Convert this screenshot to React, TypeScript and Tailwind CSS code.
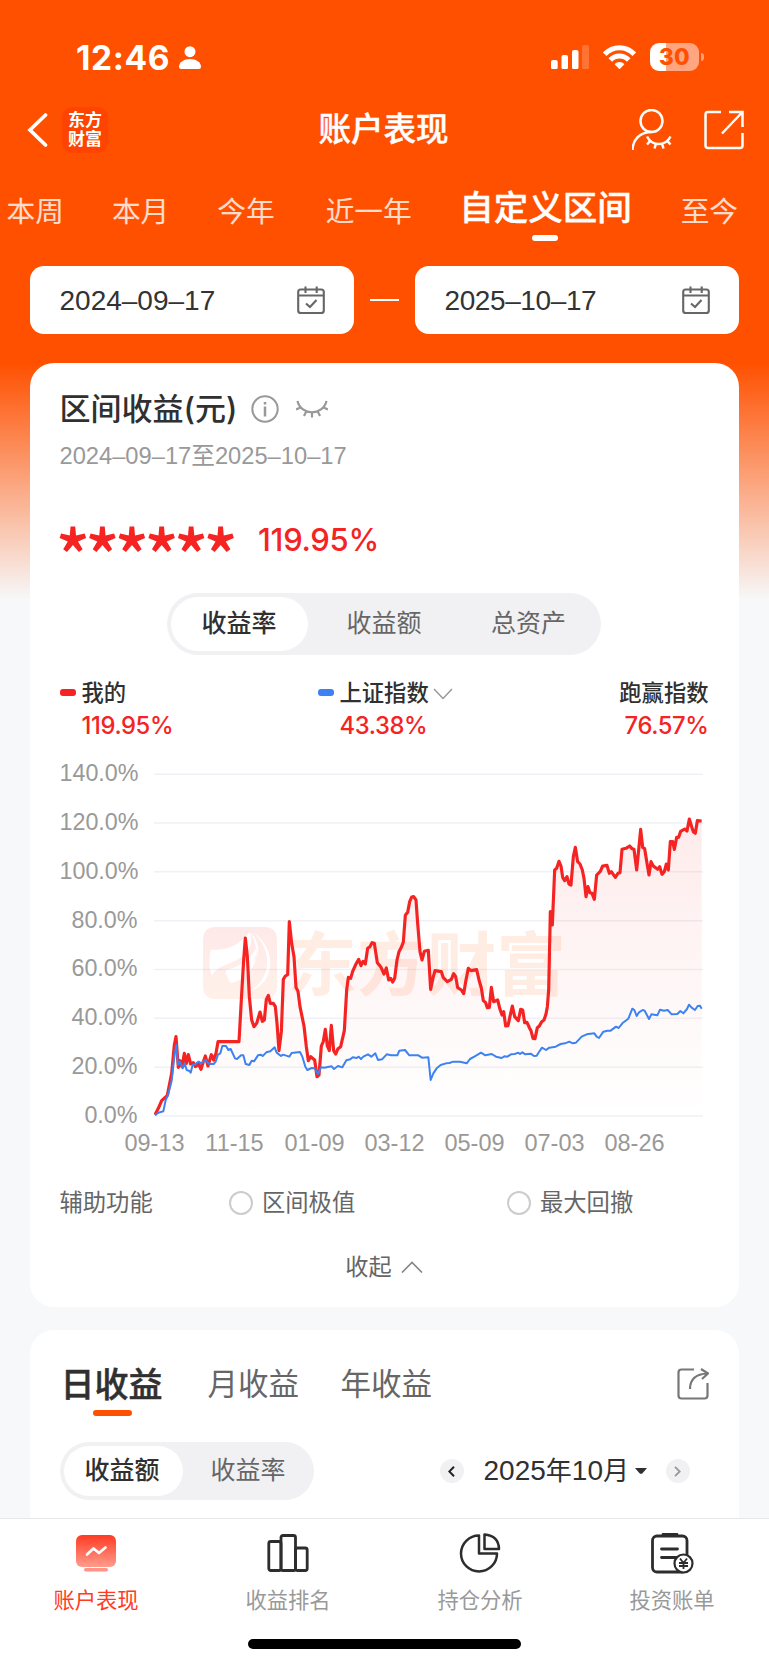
import { clsx } from "clsx"
import type { ReactNode } from "react"

const PERIODS = ["本周", "本月", "今年", "近一年", "自定义区间", "至今"]
const Y_LABELS = ["140.0%", "120.0%", "100.0%", "80.0%", "60.0%", "40.0%", "20.0%", "0.0%"]
const X_LABELS = ["09-13", "11-15", "01-09", "03-12", "05-09", "07-03", "08-26"]

// Chart space: three units per pixel, grid lines 146.5 units apart
const MINE =
  "45,1064 55,1045 65,1022 82,1006 95,940 103,855 108,830 115,922 120,902 126,920 133,880 139,910 145,884 152,912 160,908 166,920 176,912 183,928 190,905 196,888 204,918 214,884 221,900 228,880 234,845 297,845 304,720 311,600 316,534 322,590 328,710 335,780 342,800 350,790 360,756 367,784 373,780 379,718 385,706 391,730 400,730 406,740 411,790 417,872 424,815 430,658 436,648 443,644 448,485 455,550 462,590 468,682 474,694 480,740 492,798 499,860 505,902 512,890 524,900 531,950 537,945 544,858 550,844 556,808 562,858 568,872 574,796 581,872 587,882 594,866 602,860 613,812 620,690 625,652 632,655 638,634 648,612 656,598 663,617 669,604 676,612 683,565 690,560 696,548 703,550 712,608 722,620 732,642 739,624 746,660 752,655 758,666 764,655 771,600 777,575 784,562 790,546 796,466 803,457 809,425 815,411 821,410 828,420 833,490 840,575 846,600 853,574 865,571 872,688 880,650 885,632 904,635 910,653 922,665 934,658 941,641 947,650 953,683 964,690 971,701 978,660 985,625 993,632 1010,629 1017,660 1024,684 1030,722 1037,728 1042,743 1048,742 1054,682 1061,725 1073,720 1080,748 1086,765 1091,755 1097,798 1104,797 1112,760 1117,738 1124,770 1135,782 1142,748 1148,750 1154,788 1161,787 1168,803 1173,812 1179,835 1185,836 1192,803 1198,798 1205,785 1212,780 1218,762 1222,740 1226,690 1228,600 1231,455 1237,495 1244,330 1250,325 1257,304 1263,318 1268,352 1274,362 1281,350 1287,372 1293,375 1300,290 1306,262 1313,305 1320,312 1327,330 1332,355 1338,410 1344,380 1350,398 1356,400 1363,418 1370,345 1381,334 1388,318 1401,316 1408,340 1414,335 1426,352 1434,340 1440,338 1446,268 1458,265 1469,258 1476,266 1482,268 1490,330 1496,270 1502,208 1508,262 1514,266 1521,310 1527,345 1533,305 1540,318 1553,328 1559,320 1566,343 1573,335 1579,312 1585,330 1591,245 1598,245 1603,268 1610,232 1616,232 1622,214 1634,207 1641,213 1648,177 1655,200 1660,215 1666,220 1672,182 1685,183"
const INDEX =
  "45,1066 55,1058 70,1054 77,1020 84,1005 95,962 103,890 109,855 114,915 120,905 128,925 134,910 140,930 147,932 152,938 158,915 164,914 176,905 183,910 196,900 208,912 221,912 227,905 234,884 241,880 247,858 258,858 265,870 272,867 285,895 291,897 303,886 310,886 317,912 328,915 335,902 342,904 354,886 362,884 368,888 379,877 391,874 404,862 410,878 423,888 429,884 448,890 455,879 480,876 487,890 496,920 502,930 515,924 524,925 534,942 543,922 552,923 575,919 582,927 594,918 607,922 619,901 631,898 638,892 650,894 656,890 663,897 670,890 684,883 694,890 706,880 714,900 726,898 740,883 753,886 772,886 778,872 795,870 808,886 835,886 846,893 865,892 872,960 880,940 890,925 902,915 918,910 928,909 940,905 960,905 980,910 990,897 1003,890 1023,878 1036,886 1055,882 1068,890 1085,894 1093,889 1102,890 1113,883 1124,882 1135,878 1140,882 1147,877 1156,883 1172,881 1182,888 1190,887 1197,876 1206,863 1218,870 1228,863 1247,860 1262,852 1275,850 1288,845 1298,850 1308,848 1325,830 1340,823 1363,820 1370,830 1377,834 1390,815 1402,812 1412,812 1428,800 1436,804 1447,790 1465,776 1477,746 1483,750 1490,768 1497,757 1508,750 1514,752 1527,777 1534,763 1552,766 1560,749 1572,752 1583,750 1595,763 1612,762 1621,753 1630,760 1641,747 1647,734 1655,743 1665,750 1673,738 1680,737 1685,746"

function StatusBar() {
  return (
    <div className="flex h-[95px] items-start pl-[76px] pr-[65px] pt-[43px] text-white">
      <span className="w-[103px] text-[33.500px] leading-[30px] font-bold tracking-[0.600px]">12:46</span>
      <svg className="mt-[3px] h-[23px] w-[22px]" viewBox="0 0 22 23" fill="currentColor">
        <circle cx="11" cy="5.7" r="5.5" />
        <path d="M11 13c6 0 11 3.500 11 7.500 0 1.700-.8 2.500-2.300 2.500H2.300C.8 23 0 22.200 0 20.500 0 16.500 5 13 11 13Z" />
      </svg>
      <svg className="ml-auto mt-[2px] h-6 w-[38px]" viewBox="0 0 38 24" fill="currentColor">
        <rect x="0" y="15" width="6.700" height="9.300" rx="2" />
        <rect x="10.500" y="10" width="6.500" height="14.300" rx="2" />
        <rect x="21" y="5" width="6.500" height="19.300" rx="2" />
        <rect x="31" y="0" width="7" height="24.300" rx="2" opacity=".2" />
      </svg>
      <svg className="ml-[14px] mt-[2px] h-6 w-[33px]" viewBox="0 0 33 24" fill="none" stroke="currentColor" strokeWidth="5">
        <path d="M1.700 9.200C10 .7 23 .7 31.300 9.200" />
        <path d="M7.300 15c5-5.200 13.400-5.200 18.400 0" />
        <path d="M11.600 19.300c2.700-3.200 7.100-3.200 9.800 0l-4.900 5Z" fill="currentColor" stroke="none" />
      </svg>
      <div className="ml-[14px] flex h-7 w-[49px] items-center justify-center rounded-[9px] bg-[linear-gradient(90deg,#fff_0_16px,#ffa680_16px)] text-[22.500px] leading-none font-extrabold tracking-[0.300px] text-[#ff5000]">
        30
      </div>
      <div className="ml-[2px] mt-[10px] h-2 w-[3px] rounded-r-full bg-[#ff9f78]" />
    </div>
  )
}

function NavBar() {
  return (
    <div className="relative flex h-[70px] items-center text-white">
      <svg className="ml-[27px] h-9 w-[21px]" viewBox="0 0 21 36" fill="none" stroke="currentColor" strokeWidth="3.700" strokeLinecap="round">
        <path d="M18.500 3 3 18l15.500 15" />
      </svg>
      <div className="ml-[14px] flex h-[46px] w-[46px] flex-col items-center justify-center rounded-[10px] bg-[#ff4300] pb-px text-[17px] leading-[19px] font-bold">
        <span>东方</span>
        <span>财富</span>
      </div>
      <h1 className="absolute inset-x-0 pr-[2px] text-center text-[32.500px] font-medium [-webkit-text-stroke:0.4px]">账户表现</h1>
      <svg className="ml-auto h-[42px] w-[42px]" viewBox="0 0 42 42" fill="none" stroke="currentColor" strokeWidth="2.500">
        <circle cx="19.500" cy="12" r="11" />
        <path d="M.5 41C.8 31 7.500 23 19.500 23" />
        <path d="M15 27.500c5 10 18.500 10 23.500 0M18.500 31.500l-3.500 4M24 34.500l-1.500 5M30 34.500l1.500 5M35 31.500l3.500 4" />
      </svg>
      <svg className="ml-[30px] mr-[25px] h-10 w-10" viewBox="0 0 40 40" fill="none" stroke="currentColor" strokeWidth="2.500">
        <path d="M17 2H4Q1.500 2 1.500 4.500v31Q1.500 38 4 38h32q2.500 0 2.500-2.500V23M25 2h13.500v15M38 2.500 18 23.500" />
      </svg>
    </div>
  )
}

function CalendarIcon() {
  return (
    <svg className="h-[28px] w-[28px] text-[#666]" viewBox="0 0 28 28" fill="none" stroke="currentColor" strokeWidth="2.100">
      <rect x="1.200" y="3.500" width="25.600" height="23.500" rx="2.500" />
      <path d="M1 9.500h26M8.500 .5v6.500M19.700 .5v6.500" />
      <path d="m9 17.500 4 3.500 6.500-7" />
    </svg>
  )
}

function DateField({ value, tight }: { value: string; tight?: boolean }) {
  return (
    <div className="flex h-[68px] w-[324px] items-center justify-between rounded-[14px] bg-white pl-[30px] pr-[29px]">
      <span className={clsx("pt-px font-['Liberation_Sans'] text-[28px] text-[#333]", tight && "tracking-[-0.400px]")}>
        {value}
      </span>
      <CalendarIcon />
    </div>
  )
}

function ClosedEye() {
  return (
    <svg className="h-[18px] w-8" viewBox="0 0 32 18" fill="none" stroke="#999" strokeWidth="2.200">
      <path d="M1.500 1c3.500 15 25.500 15 29 0M4.500 7.500 0 9.500M10 12l-2 4M16 13v4.500M22 12l2 4M27.500 7.500 32 9.500" />
    </svg>
  )
}

function Legend({ name, value, color, arrow }: { name: string; value: string; color?: string; arrow?: boolean }) {
  return (
    <div className={clsx("flex", color ? "w-[258px]" : "ml-auto")}>
      {color && <i className={clsx("mr-[6px] mt-[13px] h-[7px] w-4 rounded-[3px]", color)} />}
      <div className={clsx("flex flex-col", !color && "items-end")}>
        <div className="flex h-[33px] items-center text-[22.300px] font-medium text-[#303030]">
          {name}
          {arrow && (
            <svg className="ml-[4px] mt-[2px] h-3 w-5" viewBox="0 0 20 12" fill="none" stroke="#999" strokeWidth="1.500">
              <path d="m1 1 9 9.500L19 1" />
            </svg>
          )}
        </div>
        <div className="flex h-[33px] items-center text-[23.800px] font-[450] tracking-[-0.400px] text-[#f62323]">{value}</div>
      </div>
    </div>
  )
}

function Chart() {
  return (
    <div className="mt-[18px] flex h-[370px]">
      <div className="-mt-[2px] flex w-[79px] shrink-0 flex-col pr-px text-right font-['Liberation_Sans'] text-[23.300px] text-[#999]">
        {Y_LABELS.map((label) => (
          <span key={label} className="h-[48.860px] shrink-0 leading-[30px]">
            {label}
          </span>
        ))}
      </div>
      <svg className="ml-[15.500px] h-[370px] w-[549px] shrink-0" viewBox="42 0 1647 1110" fill="none">
        <defs>
          <linearGradient id="area" x1="0" y1="177" x2="0" y2="1068" gradientUnits="userSpaceOnUse">
            <stop offset="0" stopColor="#f62323" stopOpacity=".09" />
            <stop offset="1" stopColor="#f62323" stopOpacity="0" />
          </linearGradient>
          <linearGradient id="mark" x1="0" y1="0" x2="0" y2="1">
            <stop offset="0" stopColor="#f62323" />
            <stop offset="1" stopColor="#ff6a1f" />
          </linearGradient>
        </defs>
        {Y_LABELS.map((label, i) => (
          <path key={label} d={`M42 ${42.5 + i * 146.5}H1689`} stroke="#eff1f6" strokeWidth="4.500" />
        ))}
        {/* Watermark */}
        <path
          fillRule="evenodd"
          d="M229 501h142q40 0 40 40v136q0 40-40 40H229q-40 0-40-40V541q0-40 40-40ZM212 569C270 572 300 552 329 517c16 42-12 78-72 98-35 12-38 30-42 32-8-20-8-55-3-78ZM257 630c50-10 80-42 92-66 6 60-34 94-76 106-8-10-15-25-16-40ZM331 517c28 50 20 82-6 100 40-25 36-70 6-100ZM341 517c62 60 50 145-17 180 80-28 92-120 17-180Z"
          fill="url(#mark)"
          opacity=".1"
        />
        <text x="442" y="690" fontSize="209" fontWeight="700" fill="#ff6a1f" opacity=".12">
          东方财富
        </text>
        <polygon points={`${MINE} 1685,1068 45,1068`} fill="url(#area)" />
        <polyline points={MINE} stroke="#f62323" strokeWidth="9.500" strokeLinejoin="round" />
        <polyline points={INDEX} stroke="#3d82f2" strokeWidth="6" strokeLinejoin="round" />
      </svg>
    </div>
  )
}

function Radio({ label }: { label: string }) {
  return (
    <div className="flex items-center gap-[9px]">
      <i className="h-6 w-6 rounded-full border-2 border-[#ccc]" />
      {label}
    </div>
  )
}

function PerformanceCard() {
  return (
    <section className="ml-[29.500px] mt-[29px] h-[944px] w-[709px] rounded-[24px] bg-white px-[30px] pt-[26px]">
      <div className="flex h-10 items-center">
        <h2 className="text-[31px] font-medium text-[#303030]">区间收益(元)</h2>
        <svg className="ml-[14px] h-7 w-7" viewBox="0 0 28 28" fill="none" stroke="#999" strokeWidth="2">
          <circle cx="14" cy="14" r="12.700" />
          <path d="M14 11.500v10M14 7v2.500" strokeWidth="2.500" />
        </svg>
        <span className="ml-[17px]">
          <ClosedEye />
        </span>
      </div>
      <div className="mt-[11px] h-8 font-['Liberation_Sans','Noto_Sans_CJK_SC'] text-[23.700px] leading-8 text-[#999]">
        2024–09–17至2025–10–17
      </div>
      <div className="mt-[46px] flex h-11 items-center text-[#f62323]">
        <span className="-ml-[4px] mt-[26px] w-[202.500px] font-['Noto_Sans_CJK_SC'] text-[72px] leading-[44px] font-medium tracking-[-5.300px] whitespace-nowrap">
          ******
        </span>
        <span className="text-[31px] font-[450] tracking-[-0.300px]">119.95%</span>
      </div>
      <div className="mx-auto mt-[31px] flex h-[62px] w-[434px] items-center rounded-full bg-[#f1f1f4] p-1 text-[25px] text-[#666]">
        <span className="flex h-full w-[137px] items-center justify-center rounded-full bg-white pr-px font-medium text-[#303030]">
          收益率
        </span>
        <span className="w-[152px] text-center">收益额</span>
        <span className="w-[137px] text-center">总资产</span>
      </div>
      <div className="mt-[21px] flex">
        <Legend name="我的" value="119.95%" color="bg-[#f62323]" />
        <Legend name="上证指数" value="43.38%" color="bg-[#3d82f2]" arrow />
        <Legend name="跑赢指数" value="76.57%" />
      </div>
      <Chart />
      <div className="-mt-px ml-[55px] flex h-7 w-[561px] text-center font-['Liberation_Sans'] text-[23.500px] leading-7 text-[#999]">
        {X_LABELS.map((label) => (
          <span key={label} className="w-[80px] shrink-0">
            {label}
          </span>
        ))}
      </div>
      <div className="mt-[28px] flex h-9 items-center text-[23.300px] text-[#666]">
        <span className="w-[169.500px]">辅助功能</span>
        <span className="w-[278px]">
          <Radio label="区间极值" />
        </span>
        <Radio label="最大回撤" />
      </div>
      <div className="mt-[28px] flex h-9 items-center justify-center gap-[9px] text-[23.200px] text-[#666]">
        收起
        <svg className="h-3 w-[22px]" viewBox="0 0 22 12" fill="none" stroke="#888" strokeWidth="1.700">
          <path d="m1 11.500 10-10 10 10" />
        </svg>
      </div>
    </section>
  )
}

function DailyCard() {
  return (
    <section className="ml-[29.500px] mt-[23px] h-[188px] w-[709px] rounded-t-[24px] bg-white px-[30px] pt-[31px]">
      <div className="flex h-[46px] items-center text-[30.500px] text-[#666]">
        <span className="relative w-[148px] pl-[1px] text-[34px] font-medium text-[#303030] [-webkit-text-stroke:0.5px]">
          日收益
          <i className="absolute -bottom-[6px] left-[33px] h-[6px] w-[39px] rounded-full bg-[#ff5000]" />
        </span>
        <span className="w-[133px]">月收益</span>
        <span>年收益</span>
        <svg className="ml-auto h-8 w-8" viewBox="0 0 32 32" fill="none" stroke="#777" strokeWidth="2.200">
          <path d="M17 1.500H4.500q-3 0-3 3v23q0 3 3 3h23q3 0 3-3V15" />
          <path d="M13 21C13 12 18 6 30.500 5.500M24 1l7 4.500-6 5.500" />
        </svg>
      </div>
      <div className="mt-[35px] flex items-center">
        <div className="flex h-[58px] w-[254px] items-center rounded-full bg-[#f1f1f4] p-1 text-[25px] text-[#666]">
          <span className="flex h-full w-[119px] items-center justify-center rounded-full bg-white pr-[2px] font-medium text-[#303030]">
            收益额
          </span>
          <span className="ml-[4px] flex-1 text-center">收益率</span>
        </div>
        <div className="ml-[126px] flex h-6 w-6 items-center justify-center rounded-full bg-[#f1f1f4]">
          <svg className="h-[11px] w-[7px]" viewBox="0 0 7 11" fill="none" stroke="#222" strokeWidth="2">
            <path d="M6 .8 1.300 5.500 6 10.200" />
          </svg>
        </div>
        <span className="ml-[20px] w-[145px] whitespace-nowrap font-['Liberation_Sans','Noto_Sans_CJK_SC'] text-[28px] text-[#303030]">
          2025<span className="text-[26px]">年</span>10<span className="text-[26px]">月</span>
        </span>
        <svg className="ml-[6px] h-[6px] w-3" viewBox="0 0 12 6" fill="#303030">
          <path d="M0 0h12L7.500 5.300q-1.500 1-3 0Z" />
        </svg>
        <div className="ml-[19px] flex h-6 w-6 items-center justify-center rounded-full bg-[#f1f1f4]">
          <svg className="h-[11px] w-[7px]" viewBox="0 0 7 11" fill="none" stroke="#999" strokeWidth="1.800">
            <path d="M1 .8 5.700 5.500 1 10.200" />
          </svg>
        </div>
      </div>
    </section>
  )
}

function TabItem({ label, active, children }: { label: string; active?: boolean; children: ReactNode }) {
  return (
    <div className={clsx("flex w-[192px] flex-col items-center", active ? "text-[#ff3b22]" : "text-[#999]")}>
      <svg className="h-[44px] w-[44px]" viewBox="0 0 44 44" fill="none" stroke="#2d2d2d" strokeWidth="2.800" strokeLinejoin="round">
        {children}
      </svg>
      <span className="mt-[10px] text-[21.300px] leading-8">{label}</span>
    </div>
  )
}

function TabBar() {
  return (
    <footer className="h-[147px] border-t border-[#e8e8e8] bg-white">
      <div className="flex pt-[11px]">
        <TabItem label="账户表现" active>
          <defs>
            <linearGradient id="screen" x1="0" y1="0" x2="0" y2="1">
              <stop offset="0" stopColor="#ff3b22" />
              <stop offset="1" stopColor="#ff9c8d" />
            </linearGradient>
          </defs>
          <rect x="2" y="5" width="40" height="32" rx="6" fill="url(#screen)" stroke="none" />
          <rect x="10" y="38" width="24" height="3.500" rx="1.700" fill="#ff9385" stroke="none" />
          <path d="m13 24.500 6.500-6 5.500 4.500 6.500-5.500" stroke="#fff" strokeWidth="2.700" strokeLinecap="round" />
        </TabItem>
        <TabItem label="收益排名">
          <rect x="2.800" y="11.500" width="12.200" height="29" rx="2" />
          <rect x="15" y="5.500" width="14.500" height="35" rx="2" />
          <rect x="29.500" y="18" width="11.700" height="22.500" rx="2" />
        </TabItem>
        <TabItem label="持仓分析">
          <path d="M21 5.500V23.500h18A18 18 0 1 1 21 5.500Z" strokeWidth="2.500" />
          <path d="M26.500 4.500q14 1 14.500 14.500H26.500Z" strokeWidth="2.500" />
        </TabItem>
        <TabItem label="投资账单">
          <rect x="2.500" y="6" width="34.500" height="36" rx="4.500" />
          <path d="M13 4.500h14M11.500 19h16M11.500 27.500h16" strokeLinecap="round" />
          <circle cx="33.500" cy="33.500" r="9" fill="#fff" strokeWidth="2.200" />
          <path d="m30 28.500 3.500 4.500 3.500-4.500M33.500 33v6M29 33h9M29 36h9" strokeWidth="1.800" />
        </TabItem>
      </div>
      <div className="mx-auto mt-[23px] h-[10px] w-[273px] rounded-full bg-black" />
    </footer>
  )
}

export default function App() {
  return (
    <div className="h-[1665px] w-[769px] overflow-hidden bg-[#f7f8fa] bg-[linear-gradient(180deg,#ff5000_0,#ff5000_363px,#f7f8fa_600px)] font-['Inter','Noto_Sans_CJK_SC',sans-serif]">
      <StatusBar />
      <NavBar />
      <div className="flex h-[101px] pl-[6.500px] pt-[27px] whitespace-nowrap text-[28.700px] text-white/80">
        {PERIODS.map((period, i) => (
          <span
            key={period}
            className={clsx(
              "relative h-[40px] shrink-0 leading-[40px]",
              i === 4 && "-mt-[4px] mr-[49px] text-[34.500px] font-medium text-white [-webkit-text-stroke:0.4px]",
              i === 5 && "w-[70px]",
              i === 3 && "mr-[47.500px]",
              i === 2 && "mr-[51px]",
              i < 2 && "mr-[48px]"
            )}
          >
            {period}
            {i === 4 && <i className="absolute left-[73px] top-[47px] h-[6px] w-[26px] rounded-[3px] bg-white" />}
          </span>
        ))}
      </div>
      <div className="ml-[29.500px] flex h-[68px] w-[709px] items-center justify-between">
        <DateField value="2024–09–17" />
        <i className="h-[2px] w-[29px] bg-white" />
        <DateField value="2025–10–17" tight />
      </div>
      <PerformanceCard />
      <DailyCard />
      <TabBar />
    </div>
  )
}
